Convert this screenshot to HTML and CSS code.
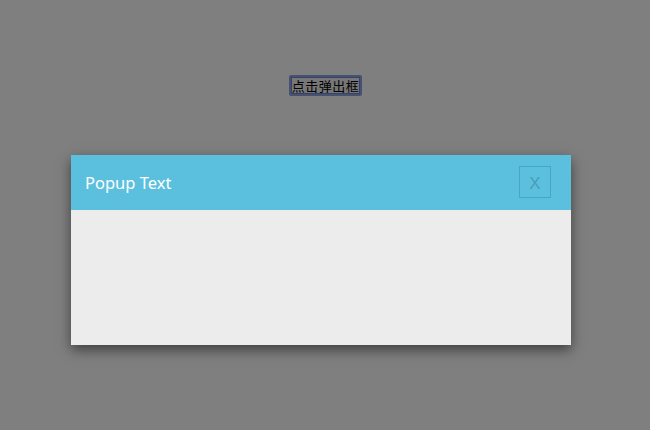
FILE: index.html
```html
<!DOCTYPE html>
<html>
<head>
<meta charset="utf-8">
<link rel="stylesheet" href="styles.css">
</head>
<body>
<div class="page">
  <button class="open-btn">点击弹出框</button>
</div>
<div class="overlay"></div>
<div class="popup">
  <div class="popup-header">
    <span class="popup-title">Popup Text</span>
    <span class="popup-close">X</span>
  </div>
  <div class="popup-body"></div>
</div>
</body>
</html>
```
FILE: styles.css
```css
html, body {
  margin: 0;
  padding: 0;
  width: 650px;
  height: 430px;
  overflow: hidden;
  background: #ffffff;
}
.page {
  display: flex;
  justify-content: center;
  padding-top: 75px;
}
.open-btn {
  font-family: "Noto Sans CJK SC", sans-serif;
  font-size: 13px;
  line-height: 15px;
  padding: 1px 1px;
  margin: 0 0 0 1px;
  background: #efefef;
  color: #000;
  border: 2px solid #8fa4e6;
  box-shadow: inset 0 0 0 1px #6f86cc;
  border-radius: 2px;
  letter-spacing: 0.5px;
}
.overlay {
  position: absolute;
  left: 0;
  top: 0;
  width: 650px;
  height: 430px;
  background: rgba(0, 0, 0, 0.5);
}
.popup {
  position: absolute;
  left: 71px;
  top: 155px;
  width: 500px;
  box-shadow: 0 5px 12px rgba(0, 0, 0, 0.5);
}
.popup-header {
  height: 55px;
  background: #5bc0de;
  display: flex;
  align-items: center;
  justify-content: space-between;
  padding: 0 20px 0 14px;
}
.popup-title {
  font-family: "Noto Sans", sans-serif;
  font-size: 16.5px;
  color: #ffffff;
  margin-top: -1px;
}
.popup-close {
  width: 30px;
  height: 30px;
  border: 1px solid #46a6c4;
  color: #4a9cb8;
  font-family: "Liberation Sans", sans-serif;
  font-size: 17px;
  line-height: 1;
  display: flex;
  align-items: center;
  justify-content: center;
  padding-top: 2px;
  box-sizing: border-box;
  height: 32px;
  width: 32px;
  margin-top: -1px;
}
.popup-body {
  height: 135px;
  background: #ececec;
}
```
